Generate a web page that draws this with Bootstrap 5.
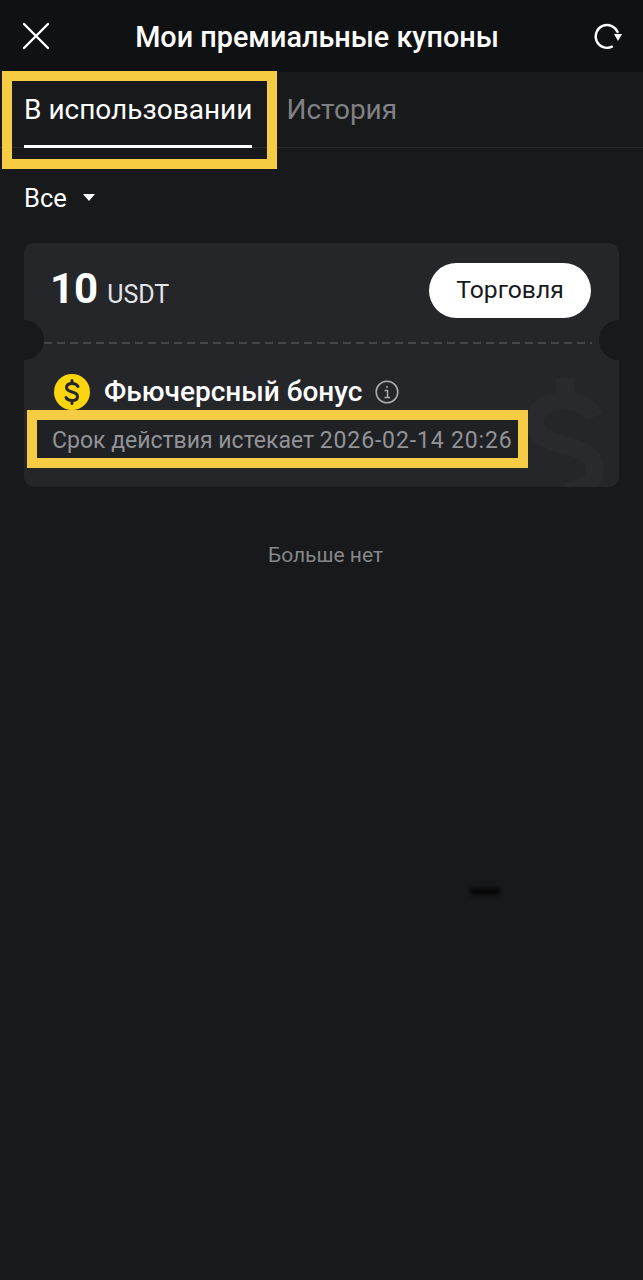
<!DOCTYPE html>
<html lang="ru">
<head>
    <meta charset="UTF-8">
    <meta name="viewport" content="width=device-width, initial-scale=1.0">
    <title>Мои премиальные купоны</title>
    <link href="https://cdn.jsdelivr.net/npm/bootstrap@5.3.0/dist/css/bootstrap.min.css" rel="stylesheet">
    <style>
        body {
            background-color: #18191b;
            font-family: Roboto, "Liberation Sans", sans-serif;
            color: #fff;
            min-height: 1280px;
        }

        .top-bar {
            height: 72px;
            padding: 0 20px 0 21px;
            background-color: #101113;
        }

        .top-title {
            font-size: 28.8px;
            font-weight: 500;
            line-height: 32px;
            margin: 2px 10px 0 0;
        }

        .tab-strip {
            height: 76px;
            padding-left: 24px;
            gap: 34px;
            border-bottom: 1px solid #2a2b2d;
        }

        .tab-item {
            font-size: 28px;
            line-height: 76px;
            height: 76px;
            color: #808185;
        }

        .tab-item.is-active {
            color: #fff;
            border-bottom: 3px solid #fff;
        }

        .mark-box {
            position: absolute;
            border: 10px solid #f7cc45;
            pointer-events: none;
        }

        .tab-mark {
            left: -22px;
            right: -25px;
            top: -1px;
            bottom: -24px;
        }

        .filter-row {
            height: 95px;
            padding: 35px 0 0 24px;
        }

        .filter-inner {
            height: 30px;
            gap: 16px;
            font-size: 25.5px;
            line-height: 30px;
        }

        .filter-caret {
            width: 0;
            height: 0;
            border-left: 6px solid transparent;
            border-right: 6px solid transparent;
            border-top: 7px solid #fff;
            margin-top: -2px;
        }

        .coupon {
            margin: 0 24px;
            height: 244px;
            background-color: #25262a;
            border: 0;
            border-radius: 10px;
            overflow: hidden;
            color: #fff;
        }

        .coupon-top {
            height: 99px;
            padding: 20px 28px 0 26px;
        }

        .coupon-value {
            margin-top: 1px;
        }

        .coupon-amount {
            font-size: 42px;
            font-weight: 700;
            line-height: 50px;
        }

        .coupon-unit {
            font-size: 25px;
            margin-left: 9px;
            color: #e4e4e6;
        }

        .trade-btn {
            width: 162px;
            height: 55px;
            font-size: 24.7px;
            line-height: 1;
            color: #18191b;
            background-color: #fff;
            border: 0;
        }

        .coupon-dash {
            height: 2px;
            margin: 0 27px 0 20px;
            background: repeating-linear-gradient(90deg, #46474b 0 8px, transparent 8px 13px);
        }

        .notch {
            position: absolute;
            top: 77px;
            width: 40px;
            height: 40px;
            border-radius: 50%;
            background-color: #18191b;
        }

        .notch-left { left: -20px; }
        .notch-right { right: -20px; }

        .bonus-row {
            margin: 30px 0 0 30px;
            height: 36px;
            gap: 14px;
            font-size: 28px;
            font-weight: 500;
            line-height: 36px;
        }

        .bonus-info { margin-left: -1px; }

        .expiry-box {
            margin: 0 0 0 3px;
            width: 501px;
            height: 58px;
            border: 10px solid #f7cc45;
            background-color: #202125;
            padding-left: 15px;
            font-size: 23px;
            line-height: 42px;
            color: #929397;
            white-space: nowrap;
            overflow: hidden;
        }

        .expiry-date {
            letter-spacing: 0.85px;
        }

        .coupon-mark {
            position: absolute;
            right: 14px;
            top: 132px;
        }

        .no-more {
            margin-top: 55px;
            padding-left: 8px;
            font-size: 21px;
            line-height: 26px;
            color: #86878a;
        }

        .smudge {
            width: 30px;
            height: 7px;
            margin: 320px 0 0 470px;
            border-radius: 4px;
            background-color: #060607;
            filter: blur(2px);
        }
    </style>
</head>
<body>
    <header class="top-bar d-flex align-items-center justify-content-between">
        <svg width="30" height="30" viewBox="0 0 30 30" fill="none" stroke="#fff" stroke-width="2.4" stroke-linecap="round">
            <path d="M3 3 L27 27 M27 3 L3 27"/>
        </svg>
        <div class="top-title">Мои премиальные купоны</div>
        <svg width="30" height="30" viewBox="0 0 30 30" fill="none">
            <path d="M24.6 11 A11.4 11.4 0 1 0 19 25.7" stroke="#fff" stroke-width="2.4" stroke-linecap="round"/>
            <path d="M21 13 L29 13 L25 20 Z" fill="#fff"/>
        </svg>
    </header>

    <nav class="tab-strip d-flex">
        <div class="tab-item is-active position-relative">В использовании<span class="mark-box tab-mark"></span></div>
        <div class="tab-item">История</div>
    </nav>

    <div class="filter-row">
        <div class="filter-inner d-flex align-items-center">
            <span>Все</span>
            <span class="filter-caret"></span>
        </div>
    </div>

    <div class="card coupon position-relative">
        <div class="coupon-top d-flex justify-content-between align-items-start">
            <div class="coupon-value d-flex align-items-baseline">
                <span class="coupon-amount">10</span>
                <span class="coupon-unit">USDT</span>
            </div>
            <button type="button" class="btn trade-btn rounded-pill p-0">Торговля</button>
        </div>
        <div class="coupon-dash"></div>
        <span class="notch notch-left"></span>
        <span class="notch notch-right"></span>
        <svg class="coupon-mark" width="80" height="112" viewBox="0 0 80 112" fill="none" stroke="#292a2e" stroke-width="18">
            <path d="M40 3 V24 M69 42 C64 30 52 26 38 26 C22 26 10 34 10 47 C10 62 24 66 40 70 C56 74 70 80 70 95 C70 108 56 116 40 116"/>
        </svg>
        <div class="bonus-row d-flex align-items-center position-relative">
            <svg width="36" height="36" viewBox="0 0 36 36" class="flex-shrink-0">
                <circle cx="18" cy="18" r="18" fill="#fcd50f"/>
                <path d="M24 12.5 C23 10.5 21 9.5 18 9.5 C14.5 9.5 12.5 11.2 12.5 13.6 C12.5 16.4 15 17.2 18 18 C21 18.8 23.5 19.6 23.5 22.4 C23.5 24.8 21.5 26.5 18 26.5 C15 26.5 13 25.5 12 23.5 M18 6.5 V9.5 M18 26.5 V29.5" fill="none" stroke="#25262a" stroke-width="3" stroke-linecap="round"/>
            </svg>
            <span>Фьючерсный бонус</span>
            <svg class="bonus-info" width="24" height="24" viewBox="0 0 24 24" fill="none" stroke="#a8a9ac" stroke-width="1.6">
                <circle cx="12" cy="12" r="10.8"/>
                <path d="M9.5 10.5 H12.5 V17.5 M9.5 17.5 H15" stroke-width="1.5"/>
                <circle cx="12" cy="7" r="1" fill="#a8a9ac" stroke="none"/>
            </svg>
        </div>
        <div class="expiry-box position-relative">Срок действия истекает <span class="expiry-date">2026-02-14 20:26</span></div>
    </div>

    <div class="no-more text-center">Больше нет</div>
    <div class="smudge"></div>

    <script src="https://cdn.jsdelivr.net/npm/bootstrap@5.3.0/dist/js/bootstrap.bundle.min.js"></script>
</body>
</html>
